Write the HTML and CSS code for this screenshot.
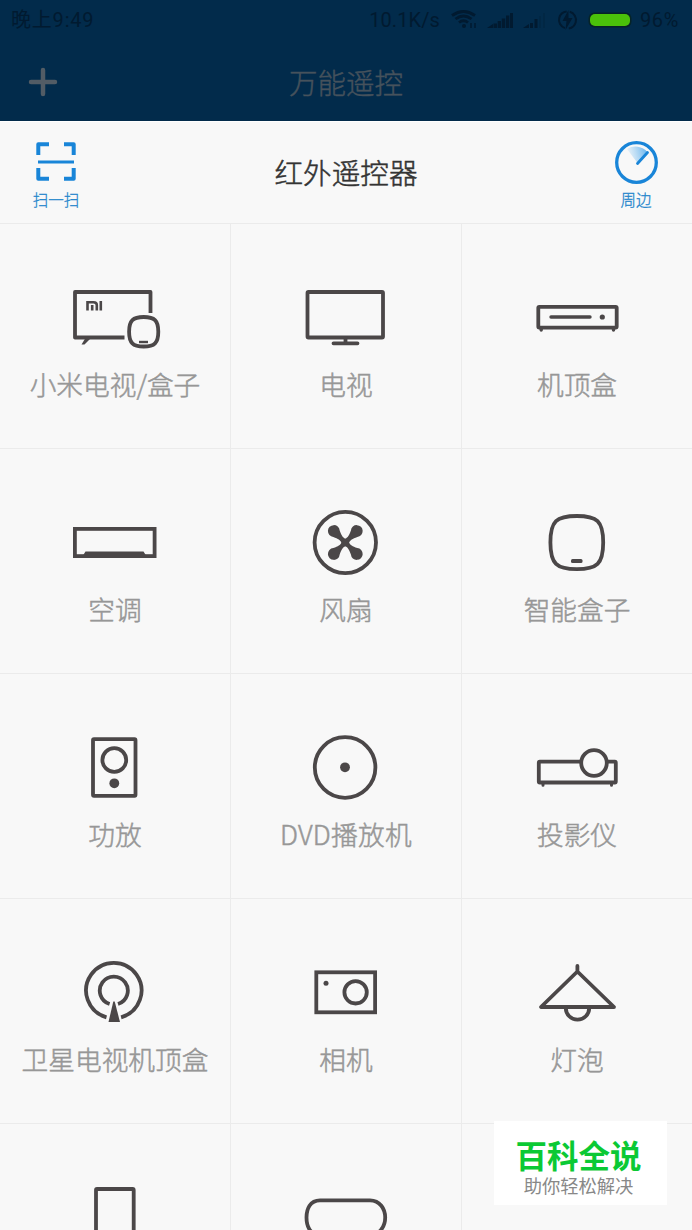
FILE: index.html
```html
<!DOCTYPE html>
<html lang="zh-CN">
<head>
<meta charset="utf-8">
<title>万能遥控</title>
<link rel="stylesheet" href="styles.css">
</head>
<body>
<div class="screen">
  <header class="app-bar">
    <div class="status">
      <span class="clock">晚上9:49</span>
      <span class="speed">10.1K/s</span>
      <svg class="status-icons" width="184" height="28" viewBox="0 5 184 28">
        <g fill="none" stroke="#011a30" stroke-width="2.8">
          <path d="M3 14.500q11.500-8 23 0M6.500 18q8-6 16 0M10 21.500q4.500-3.500 9 0"/>
        </g>
        <circle cx="15" cy="25" r="2" fill="#011a30"/>
        <path d="M22 22v5M26 22v5" stroke="#011a30" stroke-width="1.500"/>
        <g fill="#011a30">
          <path d="M38 27l6-4v4zM44.500 22.500h3.500v4.500h-3.500zM48.700 20h3.300v7h-3.300zM52.800 17.500h3.400v9.500h-3.400zM57 14.500h3.300v12.500h-3.300zM61 12h3v15h-3z"/>
          <path d="M74 27l6-4v4zM81 22h3v5h-3zM85.500 18h3v9h-3z"/>
          <path d="M90 15h2v12h-2zM94 12h2v15h-2z" opacity=".25"/>
        </g>
        <circle cx="118.500" cy="19" r="8.500" fill="none" stroke="#011a30" stroke-width="2" stroke-dasharray="23 4" transform="rotate(-75 118.500 19)"/>
        <path d="M119.500 9l-6 11h4l-1 9 7-12h-4z" fill="#011a30"/>
        <rect x="139.500" y="11.500" width="43" height="15" rx="6" fill="#062427"/>
        <rect x="141" y="13" width="40" height="12" rx="5" fill="#4ac20a"/>
      </svg>
      <span class="battery">96%</span>
    </div>
    <div class="app-title-row">
      <svg class="plus" width="30" height="30" viewBox="0 0 30 30"><path d="M3 15h24M15 3v24" stroke="#525c65" stroke-width="4.500" stroke-linecap="round"/></svg>
      <h1 class="app-title">万能遥控</h1>
    </div>
  </header>

  <section class="panel-head">
    <button class="action">
      <svg width="44" height="44" viewBox="0 0 44 44" fill="none" stroke="#1985d8" stroke-width="4">
        <path d="M4.300 15V4.300H15M30 4.300H39.700V15M4.300 28V38.700H15M30 38.700H39.700V28" stroke-linejoin="round"/>
        <path d="M4 22H40" stroke-width="2.800"/>
      </svg>
      <span>扫一扫</span>
    </button>
    <h2 class="panel-title">红外遥控器</h2>
    <button class="action">
      <svg width="44" height="44" viewBox="0 0 44 44" fill="none" stroke="#1985d8">
        <defs><linearGradient id="sweep" x1="0" y1=".5" x2="1" y2=".3"><stop offset="0" stop-color="#8cc8f3" stop-opacity=".1"/><stop offset="1" stop-color="#67b4ed"/></linearGradient></defs>
        <path d="M23.500 23L13 9A16 16 0 0 1 33.500 12Z" fill="url(#sweep)" stroke="none"/>
        <circle cx="22.500" cy="22.500" r="19.800" stroke-width="3.300"/>
        <path d="M23.500 23.500L33.500 12.500" stroke-width="2.800" stroke-linecap="round"/>
      </svg>
      <span>周边</span>
    </button>
  </section>

  <main class="grid">
    <div class="cell">
      <svg class="icon" viewBox="0 0 100 80">
        <path d="M59.500 59.500H10V14H85.500V35" stroke-linejoin="round"/><path class="solid" d="M20.500 60H26L19.500 66.500H16.500Z"/>
        <path d="M78.700 39C89.500 39 93.300 42.500 93.300 53.700S89.500 68.500 78.700 68.500 64.100 65 64.100 53.700 68 39 78.700 39Z"/>
        <path d="M74 64h9" stroke-width="2.400"/>
        <path d="M22.500 32.500V24.200H28.500Q31.800 24.200 31.800 27V32.500M27.200 27v5.500M35.800 23v9.500" stroke-width="2.600"/>
      </svg>
      <span class="label">小米电视/盒子</span>
    </div>
    <div class="cell">
      <svg class="icon" viewBox="0 0 100 80"><rect x="11.500" y="14" width="75.500" height="45.500" rx="1"/><path d="M37.500 65.300h24M49.500 60v5" stroke-linecap="round" stroke-width="3.800"/></svg>
      <span class="label">电视</span>
    </div>
    <div class="cell">
      <svg class="icon" viewBox="0 0 100 80"><rect x="11.300" y="28.800" width="78.400" height="20.800" rx="1"/><path d="M24 39h39M14.200 50v2M86.500 50v2" stroke-linecap="round" stroke-width="3.400"/><circle class="solid" cx="75.300" cy="39" r="2.600"/></svg>
      <span class="label">机顶盒</span>
    </div>

    <div class="cell">
      <svg class="icon" viewBox="0 0 100 80"><rect x="9.900" y="25.900" width="79.700" height="27.200"/><path class="solid" d="M17 54l3.500-5.500h58L82 54z"/></svg>
      <span class="label">空调</span>
    </div>
    <div class="cell">
      <svg class="icon" viewBox="0 0 100 80">
        <circle cx="49.300" cy="39.500" r="30.700"/>
        <g class="solid" transform="translate(49.300 39.500)">
          <path d="M-3.800 0C-5-2.500-7-3.800-12-5.600A5.900 5.900 0 1 1-5.600-12C-3.800-7-2.500-5 0-3.800L3.800 0 0 3.800Z"/>
          <path d="M-3.800 0C-5-2.500-7-3.800-12-5.600A5.900 5.900 0 1 1-5.600-12C-3.800-7-2.500-5 0-3.800L3.800 0 0 3.800Z" transform="rotate(90)"/>
          <path d="M-3.800 0C-5-2.500-7-3.800-12-5.600A5.900 5.900 0 1 1-5.600-12C-3.800-7-2.500-5 0-3.800L3.800 0 0 3.800Z" transform="rotate(180)"/>
          <path d="M-3.800 0C-5-2.500-7-3.800-12-5.600A5.900 5.900 0 1 1-5.600-12C-3.800-7-2.500-5 0-3.800L3.800 0 0 3.800Z" transform="rotate(270)"/>
        </g>
      </svg>
      <span class="label">风扇</span>
    </div>
    <div class="cell">
      <svg class="icon" viewBox="0 0 100 80"><path d="M49.800 13C70 13 76.200 18 76.200 39.500S70 66.200 49.800 66.200 23.400 61 23.400 39.500 29.500 13 49.800 13Z"/><rect class="solid" x="44" y="56" width="11.500" height="4" rx="1.500"/></svg>
      <span class="label">智能盒子</span>
    </div>

    <div class="cell">
      <svg class="icon" viewBox="0 0 100 80"><rect x="28" y="11.200" width="42.500" height="56.600" rx="1"/><circle cx="49.300" cy="32" r="11.900"/><circle class="solid" cx="49.300" cy="55.300" r="4.900"/></svg>
      <span class="label">功放</span>
    </div>
    <div class="cell">
      <svg class="icon" viewBox="0 0 100 80"><circle cx="49.100" cy="39.500" r="30.300"/><circle class="solid" cx="49" cy="39.300" r="4.900"/></svg>
      <span class="label label-wide">DVD播放机</span>
    </div>
    <div class="cell">
      <svg class="icon" viewBox="0 0 100 80"><rect x="11.800" y="33.700" width="77" height="20.800" rx="1"/><path d="M16 56v1.300M84.500 56v1.300" stroke-linecap="round" stroke-width="3"/><circle class="knockout" cx="67" cy="35" r="12.800"/></svg>
      <span class="label">投影仪</span>
    </div>

    <div class="cell">
      <svg class="icon" viewBox="0 0 100 80"><path d="M41.500 64.300A27.700 27.700 0 1 1 56.100 64.300M44.600 51A14 14 0 1 1 53 51"/><path class="solid" d="M48.300 48.500h1.400L55 69H43.500z"/></svg>
      <span class="label">卫星电视机顶盒</span>
    </div>
    <div class="cell">
      <svg class="icon" viewBox="0 0 100 80"><rect x="20.300" y="19.300" width="58.800" height="40"/><circle class="solid" cx="30" cy="30.200" r="2.500"/><circle cx="59.600" cy="39.300" r="11.200"/></svg>
      <span class="label">相机</span>
    </div>
    <div class="cell">
      <svg class="icon" viewBox="0 0 100 80"><path d="M50.400 13v6M50.400 18.500L14 54H87Z" stroke-linecap="round" stroke-linejoin="round"/><path d="M38.800 55A11.700 11.700 0 0 0 62.200 55"/></svg>
      <span class="label">灯泡</span>
    </div>

    <div class="cell">
      <svg class="icon" viewBox="0 0 100 80"><rect x="31" y="11" width="37.700" height="58" rx="1"/></svg>
    </div>
    <div class="cell">
      <svg class="icon" viewBox="0 0 100 80"><path d="M24 22.300H74C84 22.300 89.200 31 89.200 39.500S84 57 74 57H24C14 57 10.500 48 10.500 39.500S14 22.300 24 22.300Z"/></svg>
    </div>
    <div class="cell"></div>
  </main>

  <aside class="badge">
    <strong>百科全说</strong>
    <span>助你轻松解决</span>
  </aside>
</div>
</body>
</html>
```
FILE: styles.css
```css
* { box-sizing: border-box; }
body {
  margin: 0;
  background: #f8f8f8;
  font-family: "Noto Sans CJK SC", sans-serif;
}
.screen {
  position: relative;
  height: 1230px;
  overflow: hidden;
}
.app-bar {
  height: 121px;
  background: #022b4b;
}
.status {
  display: flex;
  align-items: center;
  height: 40px;
  padding: 0 12px 0 11px;
  color: #011a30;
  font: 20px/40px Roboto, "Noto Sans CJK SC", sans-serif;
  white-space: nowrap;
}
.clock { letter-spacing: .8px; }
.speed { margin-left: auto; margin-right: 9px; letter-spacing: .1px; }
.status-icons { flex: none; }
.battery { width: 40px; margin-left: 7px; letter-spacing: .6px; }
.app-title-row {
  display: grid;
  grid-template-columns: 60px 1fr 60px;
  align-items: center;
  height: 84px;
  padding: 0 28px;
}
.app-title {
  margin: -2px 0 0;
  color: #46525c;
  font-size: 28.5px;
  font-weight: 300;
  text-align: center;
  -webkit-text-stroke: .4px currentColor;
}
.panel-head {
  display: flex;
  justify-content: space-between;
  height: 103px;
  padding: 18px 23px 0;
  border-top: 1px solid #fff;
  border-bottom: 1px solid #ebebeb;
}
.action {
  display: flex;
  flex-direction: column;
  align-items: center;
  width: 66px;
  padding: 0;
  border: 0;
  background: none;
  color: #2586cc;
  font: 300 15.5px/24px "Noto Sans CJK SC", sans-serif;
  -webkit-text-stroke: .3px currentColor;
}
.action span { margin-top: 3px; }
.panel-title {
  margin: 12px 0 0;
  color: #333;
  font-size: 28.6px;
  font-weight: 300;
  line-height: 40px;
  -webkit-text-stroke: .5px currentColor;
}
.grid {
  display: grid;
  grid-template-columns: 231px 231px 230px;
  grid-auto-rows: 225px;
}
.cell {
  display: flex;
  flex-direction: column;
  align-items: center;
  padding-top: 54px;
  border-right: 1px solid #ebebeb;
  border-bottom: 1px solid #ebebeb;
}
.cell:nth-child(3n) { border-right: 0; }
.icon {
  flex: none;
  width: 100px;
  height: 80px;
  fill: none;
  stroke: #4b4748;
  stroke-width: 3.8;
}
.icon .solid { fill: #4b4748; stroke: none; }
.icon .knockout { fill: #f8f8f8; }
.label {
  margin-top: 6px;
  color: #979797;
  font-size: 26.7px;
  font-weight: 300;
  line-height: 40px;
  white-space: nowrap;
  -webkit-text-stroke: .5px currentColor;
}
.label-wide { letter-spacing: .3px; }
.badge {
  position: absolute;
  left: 494px;
  top: 1121px;
  display: flex;
  flex-direction: column;
  align-items: center;
  width: 173px;
  height: 84px;
  padding: 15px 4px 0 0;
  background: #fff;
}
.badge strong {
  color: #0bc934;
  font-size: 31.5px;
  font-weight: 700;
  line-height: 36px;
}
.badge span {
  margin-top: 2px;
  color: #888;
  font-size: 18.3px;
  line-height: 22px;
}
```
